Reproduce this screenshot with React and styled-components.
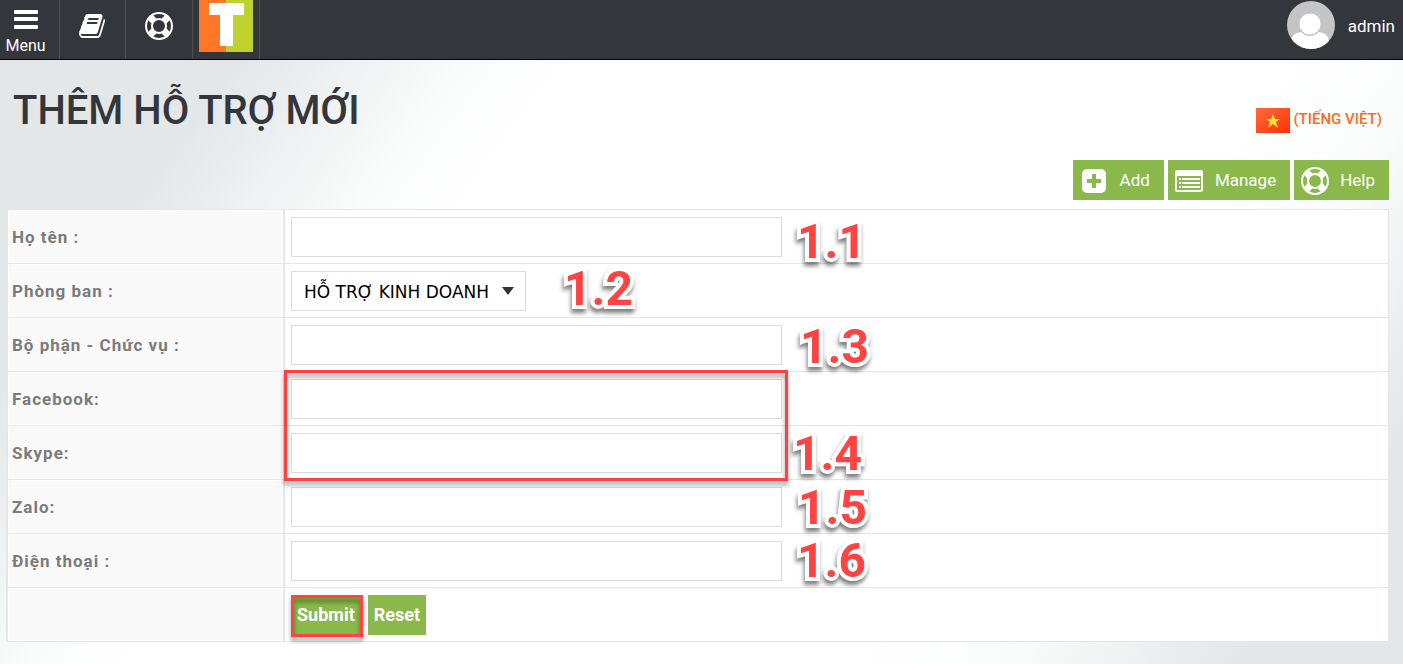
import React from "react";
import styled, { createGlobalStyle } from "styled-components";

const GlobalStyle = createGlobalStyle`
  * { box-sizing: border-box; }
  html { min-height: 100%; }
  body {
    margin: 0;
    min-height: 100vh;
    font-family: Roboto, "Liberation Sans", sans-serif;
    font-size: 17px;
    line-height: 24px;
    color: #33363b;
    background: linear-gradient(126deg, #e3e7e8 0%, #e3e7e8 15%, #fafbfb 27%, #ffffff 33%, #ffffff 70%, #fafbfb 79%, #e3e7e8 91%, #e3e7e8 100%);
  }
`;

const TopBar = styled.header`
  display: flex;
  justify-content: space-between;
  height: 60px;
  background: #33363b;
  border-bottom: 1px solid #000;
`;

const TopNav = styled.nav`
  display: flex;
`;

const NavLink = styled.a`
  display: flex;
  flex-direction: column;
  align-items: center;
  width: ${(p) => p.$width || 67}px;
  padding: ${(p) => p.$pad || "12px 0 0"};
  border-right: 1px solid #4d5055;
  color: #fff;
  font-size: 16px;
  line-height: 18px;
  text-decoration: none;
`;

const MenuText = styled.span`
  padding: 7px 8px 0 0;
`;

const MenuBars = styled.svg`
  display: block;
  margin-right: 8px;
`;

const User = styled.a`
  display: flex;
  align-items: flex-start;
  gap: 13px;
  padding: 1px 8px 0 0;
  color: #fff;
  line-height: 50px;
  text-decoration: none;
`;

const PageHead = styled.div`
  display: flex;
  justify-content: space-between;
  align-items: flex-start;
  padding: 25px 21px 0 13px;
`;

const Title = styled.h1`
  margin: 0;
  font-size: 40px;
  line-height: 52px;
  font-weight: 500;
`;

const Language = styled.a`
  display: flex;
  align-items: flex-start;
  gap: 3px;
  margin-top: 23px;
  color: #f96e20;
  font-size: 15px;
  line-height: 22px;
  font-weight: 500;
  text-decoration: none;
`;

const Actions = styled.div`
  display: flex;
  justify-content: flex-end;
  gap: 4px;
  padding: 23px 14px 9px;
`;

const Action = styled.a`
  display: flex;
  align-items: center;
  gap: ${(p) => p.$gap || 12}px;
  height: 40px;
  padding: 0 14px 0 7px;
  background: #8ab84a;
  color: #fff;
  text-decoration: none;
  svg { margin-top: 2px; }
`;

const FormArea = styled.form`
  margin: 0 14px 22px 6px;
`;

const Table = styled.table`
  width: 100%;
  border-spacing: 0;
  border: solid #e5e6e7;
  border-width: 1px 1px 0 2px;
`;

const LabelCell = styled.th`
  width: 275px;
  height: 54px;
  padding: 0 4px;
  text-align: left;
  font-weight: 700;
  letter-spacing: 1px;
  color: #7b7b7b;
  background: #f9f9f9;
  border-bottom: 1px solid #e5e6e7;
  box-shadow: inset 0 0 0 1px #fff;
`;

const FieldCell = styled.td`
  position: relative;
  padding: 7px 6px 6px;
  background: #fff;
  border-left: 2px solid #e5e6e7;
  border-bottom: 1px solid #e5e6e7;
`;

const TextInput = styled.input`
  display: block;
  width: 491px;
  max-width: 100%;
  height: 40px;
  padding: 0 12px;
  border: 1px solid #dcdcdc;
  background: #fff;
  font: inherit;
`;

const SelectWrap = styled.div`
  position: relative;
  width: 235px;
`;

const Select = styled.select`
  display: block;
  appearance: none;
  width: 100%;
  height: 40px;
  padding: 2px 12px 0;
  border: 1px solid #dcdcdc;
  border-radius: 0;
  background: #fff;
  color: #000;
  font-family: "DejaVu Sans", sans-serif;
  font-size: 17px;
  line-height: 36px;
`;

const SelectArrow = styled.svg`
  position: absolute;
  right: 12px;
  top: 16px;
  pointer-events: none;
`;

const Buttons = styled.div`
  display: flex;
  gap: 7px;
`;

const FormButton = styled.button`
  height: 40px;
  padding: 0 6px;
  border: 0;
  background: #8ab84a;
  color: #fff;
  font: 700 18px/40px Roboto, sans-serif;
`;

const Frame = styled.div`
  position: absolute;
  left: ${(p) => p.$left}px;
  top: ${(p) => p.$top}px;
  width: ${(p) => p.$width}px;
  height: ${(p) => p.$height}px;
  border: 3px solid #ff4242;
  filter: drop-shadow(0 4px 2px rgba(0, 0, 0, 0.4));
  pointer-events: none;
  z-index: 1;
`;

const Step = styled.span`
  position: absolute;
  left: ${(p) => p.$left}px;
  top: ${(p) => p.$top}px;
  font-family: Roboto, sans-serif;
  font-size: 48px;
  line-height: 48px;
  font-weight: 700;
  color: #ff4242;
  -webkit-text-stroke: 8px #fff;
  stroke-linejoin: round;
  paint-order: stroke fill;
  filter: drop-shadow(-1px 4px 2px rgba(0, 0, 0, 0.5));
  pointer-events: none;
  z-index: 2;
`;

const RING =
  "M896 0q182 0 348 71t286 191 191 286 71 348-71 348-191 286-286 191-348 71-348-71-286-191-191-286-71-348 71-348 191-286 286-191 348-71zm0 128q-190 0-361 90l194 194q82-28 167-28t167 28l194-194q-171-90-361-90zm-678 1129l194-194q-28-82-28-167t28-167l-194-194q-90 171-90 361t90 361zm678 407q190 0 361-90l-194-194q-82 28-167 28t-167-28l-194 194q171 90 361 90zm0-384q159 0 271.500-112.500t112.500-271.500-112.500-271.500-271.500-112.500-271.500 112.500-112.500 271.500 112.500 271.500 271.500 112.500zm484-217l194 194q90-171 90-361t-90-361l-194 194q28 82 28 167t-28 167z";

const BOOK =
  "M1639 478q40 57 18 129l-275 906q-19 64-76.500 107.500t-122.500 43.500h-923q-77 0-148.500-53.500t-99.500-131.500q-24-67-2-127 0-4 3-27t4-37q1-8-3-21.500t-3-19.500q2-11 8-21t16.500-23.500 16.500-23.500q23-38 45-91.500t30-91.500q3-10 .5-30t-.5-28q3-11 17-28t17-23q21-36 42-92t25-90q1-9-2.500-32t.5-28q4-13 22-30.500t22-22.500q19-26 42.500-84.500t27.500-96.500q1-8-3-25.500t-2-26.500q2-8 9-18t18-23 17-21q8-12 16.500-30.500t15-35 16-36 19.500-32 26.500-23.500 36-11.500 47.500 5.500l-1 3q38-9 51-9h761q74 0 114 56t18 130l-274 906q-36 119-71.500 153.500t-128.500 34.500h-869q-27 0-38 15-11 16-1 43 24 70 144 70h923q29 0 56-15.500t35-41.500l300-987q7-22 5-57 38 15 59 43zm-1064 2q-4 13 2 22.500t20 9.500h608q13 0 25.500-9.500t16.500-22.500l21-64q4-13-2-22.500t-20-9.500h-608q-13 0-25.500 9.500t-16.500 22.500zm-83 256q-4 13 2 22.500t20 9.500h608q13 0 25.500-9.500t16.500-22.500l21-64q4-13-2-22.500t-20-9.500h-608q-13 0-25.500 9.500t-16.500 22.500z";

const RingIcon = () => (
  <svg width="28" height="28" viewBox="0 0 1792 1792" fill="#fff" aria-hidden="true"><path d={RING} /></svg>
);

const rows = [
  { id: "name", label: "Họ tên :", step: "1.1", left: 512, top: 8 },
  { id: "department", label: "Phòng ban :", step: "1.2", left: 279, top: 1, options: ["HỖ TRỢ KINH DOANH"] },
  { id: "position", label: "Bộ phận - Chức vụ :", step: "1.3", left: 515, top: 5 },
  { id: "facebook", label: "Facebook:", frame: true },
  { id: "skype", label: "Skype:", step: "1.4", left: 508, top: 4 },
  { id: "zalo", label: "Zalo:", step: "1.5", left: 513, top: 4 },
  { id: "phone", label: "Điện thoại :", step: "1.6", left: 512, top: 3 },
];

export default function App() {
  return (
    <>
      <GlobalStyle />
      <TopBar>
        <TopNav>
          <NavLink href="#" $width={60} $pad="10px 0 0">
            <MenuBars width="24" height="20" viewBox="0 0 24 20" fill="#fff" aria-hidden="true">
              <rect y="0" width="24" height="4" rx="1" />
              <rect y="7" width="24" height="4" rx="1" />
              <rect y="15" width="24" height="4" rx="1" />
            </MenuBars>
            <MenuText>Menu</MenuText>
          </NavLink>
          <NavLink href="#" aria-label="Book" $width={66}>
            <svg width="28" height="28" viewBox="0 0 1792 1792" fill="#fff" aria-hidden="true"><path d={BOOK} /></svg>
          </NavLink>
          <NavLink href="#" aria-label="Support">
            <RingIcon />
          </NavLink>
          <NavLink href="#" aria-label="Home" $pad="0">
            <svg width="54" height="52" viewBox="0 0 54 52" aria-hidden="true">
              <rect width="27" height="52" fill="#ff7625" />
              <rect x="27" width="27" height="52" fill="#bdd12f" />
              <path d="M10 3h35v12H34v31H21V15H10z" fill="#fff" />
            </svg>
          </NavLink>
        </TopNav>
        <User href="#">
          <svg width="48" height="48" viewBox="0 0 48 48" aria-hidden="true">
            <clipPath id="avatar"><circle cx="24" cy="24" r="24" /></clipPath>
            <g clipPath="url(#avatar)">
              <rect width="48" height="48" fill="#c5c5c5" />
              <path d="M4 48v-8q1-8 10-9 4 4 9 4t9-4q9 1 10 9v8z" fill="#fff" />
              <circle cx="23" cy="23" r="11" fill="#fff" stroke="#c5c5c5" />
            </g>
          </svg>
          admin
        </User>
      </TopBar>
      <main>
        <PageHead>
          <Title>THÊM HỖ TRỢ MỚI</Title>
          <Language href="#">
            <svg width="34" height="25" viewBox="0 0 34 25" aria-hidden="true">
              <defs>
                <linearGradient id="flag" x1="0" y1="0" x2="1" y2="1">
                  <stop offset="0" stopColor="#ff6a3c" />
                  <stop offset="1" stopColor="#fb3206" />
                </linearGradient>
              </defs>
              <rect width="34" height="25" fill="url(#flag)" />
              <path d="M17 6l2 5h5l-4 3 2 6-5-4-5 4 2-6-4-3h5z" fill="#ffde35" />
            </svg>
            (TIẾNG VIỆT)
          </Language>
        </PageHead>
        <Actions>
          <Action href="#">
            <svg width="28" height="28" viewBox="0 0 28 28" aria-hidden="true">
              <rect x="2" y="2" width="24" height="24" rx="5" fill="#fff" />
              <path d="M14 7v14M7 14h14" stroke="#8ab84a" strokeWidth="4" />
            </svg>
            Add
          </Action>
          <Action href="#">
            <svg width="28" height="28" viewBox="0 0 28 28" aria-hidden="true">
              <rect x="0" y="3" width="28" height="22" rx="2" fill="#fff" />
              <rect x="2" y="9" width="24" height="14" fill="#8ab84a" />
              <path d="M4 12h2M7 12h18M4 16h2M7 16h18M4 20h2M7 20h18" stroke="#fff" strokeWidth="2" />
            </svg>
            Manage
          </Action>
          <Action href="#" $gap={11}>
            <RingIcon />
            Help
          </Action>
        </Actions>
        <FormArea onSubmit={(e) => e.preventDefault()}>
          <Table>
            <tbody>
              {rows.map((row) => (
                <tr key={row.id}>
                  <LabelCell scope="row"><label htmlFor={row.id}>{row.label}</label></LabelCell>
                  <FieldCell>
                    {row.options ? (
                      <SelectWrap>
                        <Select id={row.id}>
                          {row.options.map((o) => <option key={o}>{o}</option>)}
                        </Select>
                        <SelectArrow width="12" height="8" viewBox="0 0 12 8" aria-hidden="true">
                          <path d="M0 0h12L6 8z" fill="#333" />
                        </SelectArrow>
                      </SelectWrap>
                    ) : (
                      <TextInput id={row.id} type="text" />
                    )}
                    {row.frame && <Frame $left={-1} $top={-2} $width={504} $height={111} />}
                    {row.step && <Step $left={row.left} $top={row.top}>{row.step}</Step>}
                  </FieldCell>
                </tr>
              ))}
              <tr>
                <LabelCell as="td" />
                <FieldCell>
                  <Buttons>
                    <FormButton type="submit">Submit</FormButton>
                    <FormButton type="reset">Reset</FormButton>
                  </Buttons>
                  <Frame $left={6} $top={7} $width={72} $height={42} />
                </FieldCell>
              </tr>
            </tbody>
          </Table>
        </FormArea>
      </main>
    </>
  );
}
